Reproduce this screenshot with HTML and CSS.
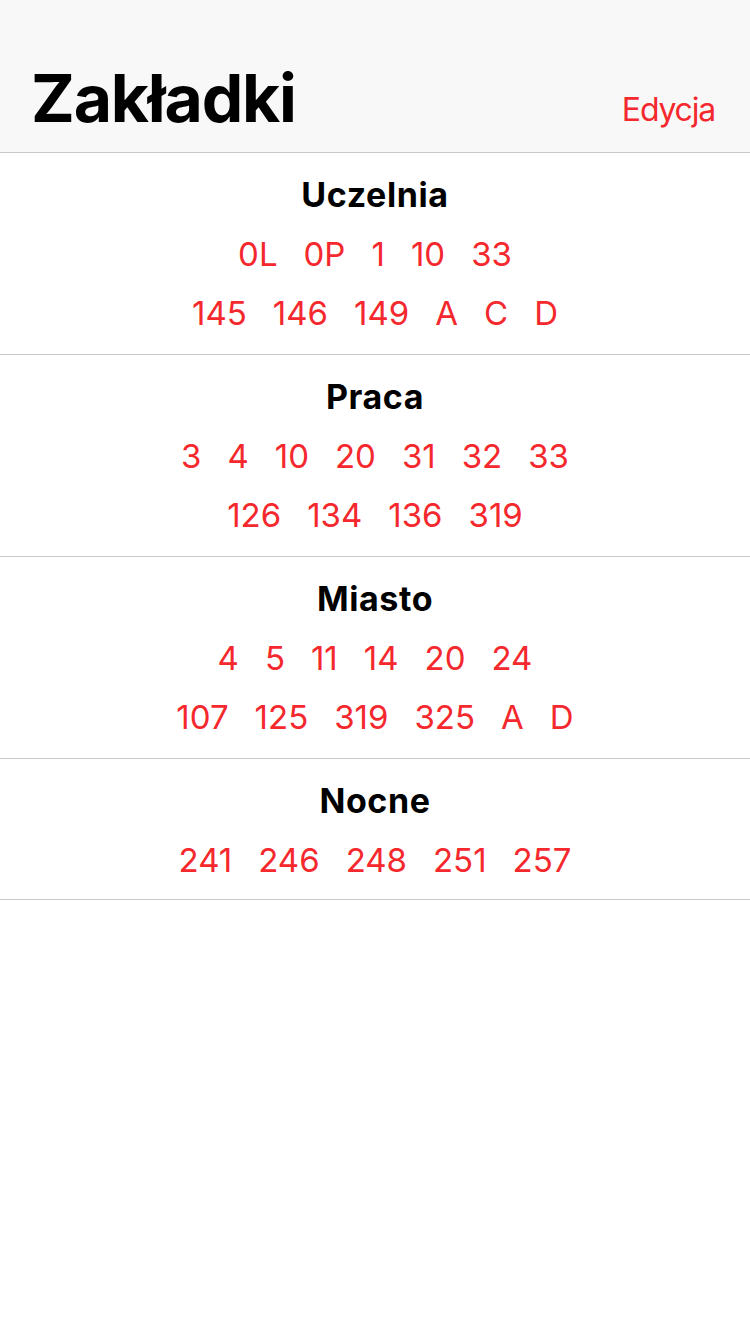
FILE: index.html
```html
<!DOCTYPE html>
<html lang="pl">
<head>
<meta charset="utf-8">
<title>Zakładki</title>
<link rel="stylesheet" href="styles.css">
</head>
<body>
<header class="navbar">
  <h1 class="nav-title">Zakładki</h1>
  <span class="nav-action">Edycja</span>
</header>
<main class="list">
  <section class="group">
    <h2 class="group-title">Uczelnia</h2>
    <div class="line-row"><span>0L</span><span>0P</span><span>1</span><span>10</span><span>33</span></div>
    <div class="line-row"><span>145</span><span>146</span><span>149</span><span>A</span><span>C</span><span>D</span></div>
  </section>
  <section class="group">
    <h2 class="group-title">Praca</h2>
    <div class="line-row"><span>3</span><span>4</span><span>10</span><span>20</span><span>31</span><span>32</span><span>33</span></div>
    <div class="line-row"><span>126</span><span>134</span><span>136</span><span>319</span></div>
  </section>
  <section class="group">
    <h2 class="group-title">Miasto</h2>
    <div class="line-row"><span>4</span><span>5</span><span>11</span><span>14</span><span>20</span><span>24</span></div>
    <div class="line-row"><span>107</span><span>125</span><span>319</span><span>325</span><span>A</span><span>D</span></div>
  </section>
  <section class="group group-single">
    <h2 class="group-title">Nocne</h2>
    <div class="line-row"><span>241</span><span>246</span><span>248</span><span>251</span><span>257</span></div>
  </section>
</main>
</body>
</html>
```

FILE: styles.css
```css
* { box-sizing: border-box; }
html, body {
  margin: 0;
  padding: 0;
  background: #ffffff;
  font-family: Inter, "Liberation Sans", sans-serif;
  width: 750px;
  height: 1334px;
}
.navbar {
  height: 153px;
  background: #f8f8f8;
  border-bottom: 1px solid #c8c7cc;
  display: flex;
  align-items: flex-end;
  justify-content: space-between;
  padding: 0 35px 14px 31px;
}
.nav-title {
  margin: 0;
  font-size: 66px;
  font-weight: 700;
  letter-spacing: -1.2px;
  color: #000;
  line-height: 80px;
}
.nav-action {
  font-size: 32px;
  letter-spacing: -1.2px;
  color: #f4282d;
  line-height: 44px;
  padding-bottom: 6px;
}
.group {
  border-bottom: 1px solid #c8c7cc;
  padding: 12px 0 11px;
  display: flex;
  flex-direction: column;
  align-items: center;
}
.group-single {
  padding-bottom: 9px;
}
.group-title {
  margin: 0;
  height: 60px;
  line-height: 60px;
  font-size: 34px;
  font-weight: 700;
  letter-spacing: 0.6px;
  color: #000;
}
.line-row {
  height: 59px;
  line-height: 59px;
  display: flex;
  justify-content: center;
  gap: 26px;
  font-size: 33px;
  color: #f4282d;
}
```
